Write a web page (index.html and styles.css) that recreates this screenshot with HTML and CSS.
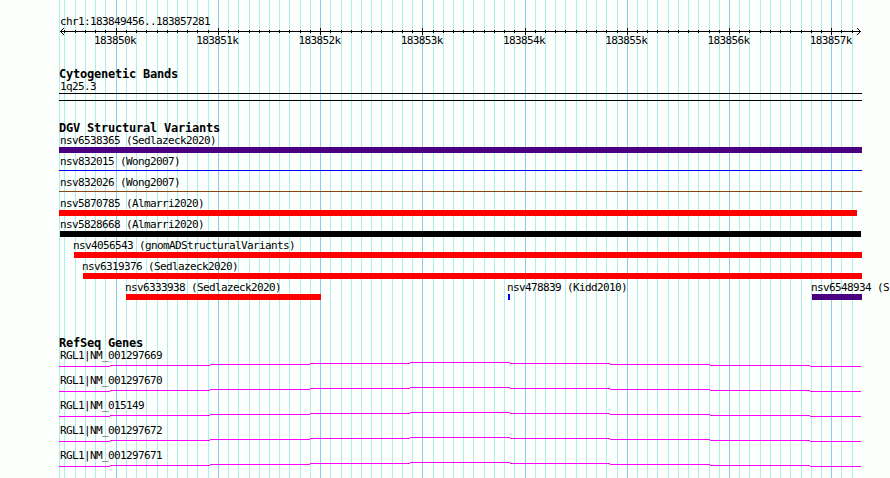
FILE: index.html
```html
<!DOCTYPE html>
<html lang="en">
<head>
    <meta charset="UTF-8">
    <meta name="viewport" content="width=device-width, initial-scale=1.0">
    <title>chr1:183849456..183857281</title>
    <link rel="stylesheet" href="styles.css">
</head>
<body>
    <div class="browser">
        <svg class="grid" id="grid" width="890" height="478"></svg>

        <div class="tracks">
            <section class="ruler">
                <div class="label">chr1:183849456..183857281</div>
                <svg class="axis" id="axis" width="890" height="9"></svg>
                <div class="ticks">
                    <span>183850k</span>
                    <span>183851k</span>
                    <span>183852k</span>
                    <span>183853k</span>
                    <span>183854k</span>
                    <span>183855k</span>
                    <span>183856k</span>
                    <span>183857k</span>
                </div>
            </section>

            <section class="cytoband">
                <h2>Cytogenetic Bands</h2>
                <div class="label">1q25.3</div>
                <div class="band"></div>
            </section>

            <section class="variants">
                <h2>DGV Structural Variants</h2>
                <div class="variant"><div class="label">nsv6538365 (Sedlazeck2020)</div><div class="bar indigo"></div></div>
                <div class="variant"><div class="label">nsv832015 (Wong2007)</div><div class="bar thin blue"></div></div>
                <div class="variant"><div class="label">nsv832026 (Wong2007)</div><div class="bar thin brown"></div></div>
                <div class="variant v5870785"><div class="label">nsv5870785 (Almarri2020)</div><div class="bar red"></div></div>
                <div class="variant v5828668"><div class="label">nsv5828668 (Almarri2020)</div><div class="bar black"></div></div>
                <div class="variant v4056543"><div class="label">nsv4056543 (gnomADStructuralVariants)</div><div class="bar red"></div></div>
                <div class="variant v6319376"><div class="label">nsv6319376 (Sedlazeck2020)</div><div class="bar red"></div></div>
                <div class="row">
                    <div class="variant v6333938"><div class="label">nsv6333938 (Sedlazeck2020)</div><div class="bar red"></div></div>
                    <div class="variant v478839"><div class="label">nsv478839 (Kidd2010)</div><div class="bar blue"></div></div>
                    <div class="variant v6548934"><div class="label">nsv6548934 (S</div><div class="bar indigo"></div></div>
                </div>
            </section>

            <section class="genes">
                <h2>RefSeq Genes</h2>
                <div class="gene"><div class="label">RGL1|NM_001297669</div><svg class="intron" width="802" height="5"></svg></div>
                <div class="gene"><div class="label">RGL1|NM_001297670</div><svg class="intron" width="802" height="5"></svg></div>
                <div class="gene"><div class="label">RGL1|NM_015149</div><svg class="intron" width="802" height="5"></svg></div>
                <div class="gene"><div class="label">RGL1|NM_001297672</div><svg class="intron" width="802" height="5"></svg></div>
                <div class="gene"><div class="label">RGL1|NM_001297671</div><svg class="intron" width="802" height="5"></svg></div>
            </section>
        </div>
    </div>

    <script>
        const start = 183849456;
        const end = 183857281;
        const left = 60;
        const scale = 800 / (end - start);

        let grid = '<path class="minor" d="M59 0h1v478h-1z"/>';
        let axis = '<path d="M60 4h801v1h-801z"/>';
        for (let pos = 183849500; pos < end; pos += 100) {
            const x = Math.round(left + (pos - start) * scale);
            const major = pos % 1000 === 0;
            grid += `<path class="${major ? 'major' : 'minor'}" d="M${x} 0h1v478h-1z"/>`;
            axis += major ? `<path d="M${x} 1h1v7h-1z"/>` : `<path d="M${x} 3h1v3h-1z"/>`;
        }

        // arrow heads, one pixel per step
        for (let i = 1; i <= 3; i++) {
            axis += `<path d="M${60 + i} ${4 - i}h1v1h-1zM${60 + i} ${4 + i}h1v1h-1z"/>`;
            axis += `<path d="M${860 - i} ${4 - i}h1v1h-1zM${860 - i} ${4 + i}h1v1h-1z"/>`;
        }
        document.getElementById('grid').innerHTML = grid;
        document.getElementById('axis').innerHTML = axis;

        // the intron line climbs one pixel at a time to the middle and back
        const steps = [[0, 51, 4], [51, 100, 3], [151, 100, 2], [251, 100, 1], [351, 100, 0],
                       [451, 100, 1], [551, 100, 2], [651, 100, 3], [751, 51, 4]];
        for (const svg of document.querySelectorAll('.intron')) {
            svg.innerHTML = steps.map(([x, w, y]) => `<path d="M${x} ${y}h${w}v1h-${w}z"/>`).join('');
        }
    </script>
</body>
</html>
```
FILE: styles.css
```css
body {
    margin: 0;
    background-color: #fdfffc;
    color: #000;
    font-family: "DejaVu Sans Mono", monospace;
    font-size: 11px;
    letter-spacing: -0.62px;
    line-height: 12px;
    overflow: hidden;
}
svg {
    display: block;
    shape-rendering: crispEdges;
}
.browser {
    display: grid;
    width: 890px;
    height: 478px;
    overflow: hidden;
}
.grid, .tracks {
    grid-area: 1 / 1;
    min-width: 0;
}
.minor {
    fill: #afeeee;
}
.major {
    fill: #87ceeb;
}
.tracks {
    padding-top: 15px;
}
h2 {
    margin: 0 0 0 59px;
    font-size: 12px;
    font-weight: bold;
    letter-spacing: -0.22px;
    line-height: 13px;
    height: 12px;
}
.label {
    height: 12px;
    line-height: 14px;
    padding-left: 1px;
    white-space: nowrap;
}
.ruler {
    height: 53px;
}
.ruler .label {
    padding-left: 60px;
}
.ticks {
    display: flex;
    gap: 60.25px;
    padding-left: 94px;
    margin-top: -1px;
}
.ticks span {
    width: 42px;
}
.cytoband {
    height: 54px;
}
.cytoband .label {
    padding-left: 60px;
}
.band {
    width: 803px;
    height: 6px;
    margin: 1px 0 0 59px;
    border-top: 1px solid #000;
    border-bottom: 1px solid #000;
}
.variants {
    height: 215px;
}
.variant {
    height: 21px;
    margin-left: 59px;
    width: 803px;
}
.bar {
    height: 6px;
    margin-top: 1px;
}
.thin {
    height: 1px;
    margin-top: 3px;
}
.indigo {
    background-color: #4b0082;
}
.blue {
    background-color: #0000ff;
}
.brown {
    background-color: #8b4513;
}
.red {
    background-color: #ff0000;
}
.black {
    background-color: #000;
}
.v5870785 {
    width: 798px;
}
.v5828668 {
    margin-left: 60px;
    width: 801px;
}
.v5828668 .label {
    padding-left: 0;
}
.v4056543 .label, .v6319376 .label, .row .label {
    padding-left: 0;
    margin-left: -1px;
}
.v4056543 {
    margin-left: 74px;
    width: 788px;
}
.v6319376 {
    margin-left: 83px;
    width: 779px;
}
.row {
    display: flex;
}
.row .variant {
    flex-shrink: 0;
}
.v6333938 {
    margin-left: 126px;
    width: 195px;
}
.v478839 {
    margin-left: 187px;
    width: 2px;
}
.v6548934 {
    margin-left: 302px;
    width: 50px;
}
.gene {
    height: 25px;
    margin-left: 59px;
}
.intron {
    fill: #ff00ff;
    margin-top: 1px;
}
```
